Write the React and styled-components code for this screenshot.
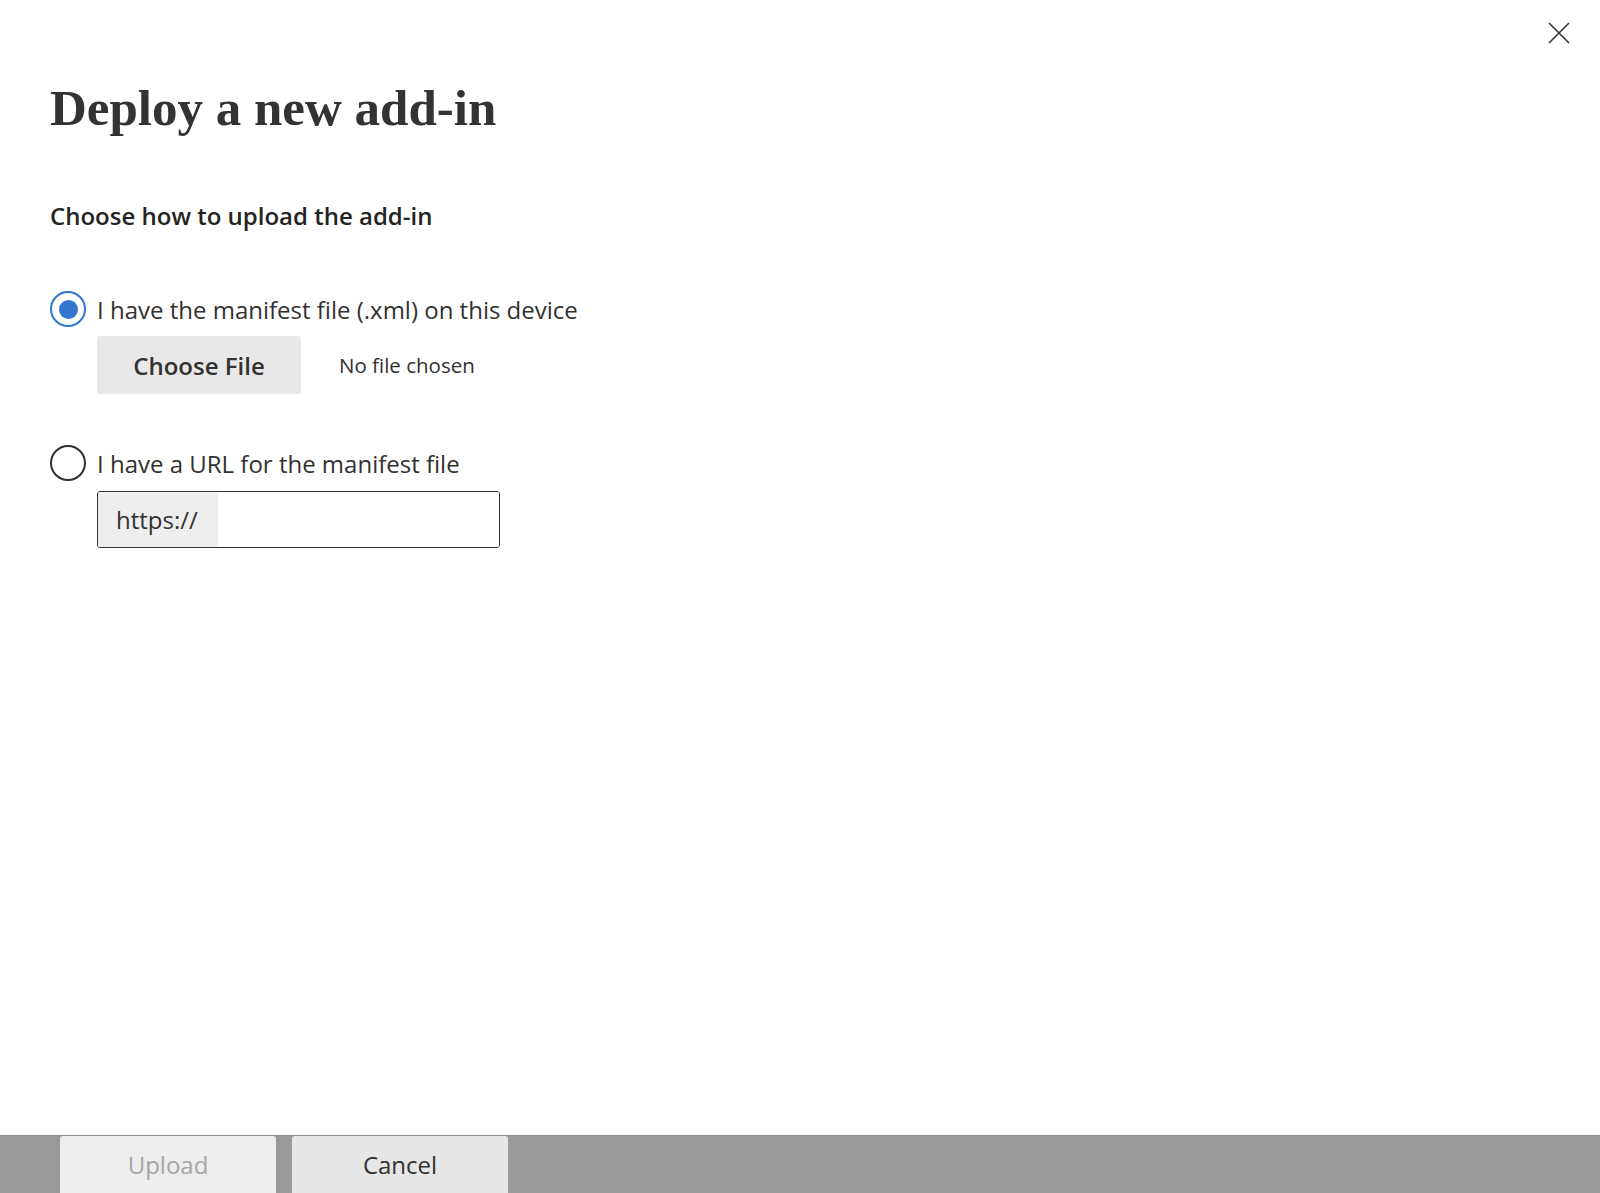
import React from "react";
import styled, { createGlobalStyle } from "styled-components";

const Global = createGlobalStyle`
  html, body { margin: 0; padding: 0; background: #fff; }
  body { font-family: "Open Sans", "Noto Sans", sans-serif; color: #323130; }
  #root { min-height: 100vh; }
`;

const Page = styled.div`
  height: 100vh;
  display: flex;
  flex-direction: column;
  position: relative;
  overflow: hidden;
`;

const Content = styled.main`
  flex: 1;
  padding: 78px 0 0 50px;
  display: flex;
  flex-direction: column;
`;

const CloseButton = styled.button`
  position: absolute;
  top: 22px;
  right: 30px;
  width: 22px;
  height: 22px;
  padding: 0;
  border: none;
  background: transparent;
  cursor: pointer;
  svg { display: block; }
`;

const Title = styled.h1`
  margin: 0;
  font-family: "Liberation Serif", "Times New Roman", serif;
  font-weight: 700;
  font-size: 51px;
  line-height: 60px;
  color: #333;
`;

const Subtitle = styled.h2`
  margin: 63px 0 0;
  font-size: 24px;
  line-height: 30px;
  font-weight: 600;
  color: #252423;
`;

const Option = styled.div`
  display: flex;
  flex-direction: column;
  margin-top: ${(p) => p.$gap}px;
`;

const RadioRow = styled.label`
  display: flex;
  align-items: center;
  gap: 11px;
  height: 36px;
  font-size: 24px;
  color: #323130;
  cursor: pointer;
`;

const RadioCircle = styled.span`
  box-sizing: border-box;
  width: 36px;
  height: 36px;
  border-radius: 50%;
  border: 2px solid ${(p) => (p.$checked ? "#2f78d3" : "#323130")};
  display: flex;
  align-items: center;
  justify-content: center;
  flex-shrink: 0;
  &::after {
    content: "";
    width: 19px;
    height: 19px;
    border-radius: 50%;
    background: ${(p) => (p.$checked ? "#3276cf" : "transparent")};
  }
`;

const SubRow = styled.div`
  display: flex;
  align-items: center;
  margin: ${(p) => p.$top}px 0 0 47px;
`;

const FileButton = styled.button`
  width: 204px;
  height: 58px;
  border: none;
  border-radius: 3px;
  background: #e8e8e8;
  font-family: inherit;
  font-size: 24px;
  font-weight: 600;
  color: #323130;
  padding: 0;
`;

const FileStatus = styled.span`
  margin-left: 38px;
  font-size: 20.5px;
  color: #323130;
`;

const UrlField = styled.div`
  box-sizing: border-box;
  width: 403px;
  height: 57px;
  border: 1.5px solid #333;
  border-radius: 3px;
  display: flex;
  overflow: hidden;
`;

const UrlPrefix = styled.span`
  flex: 0 0 120px;
  background: #eeeeee;
  display: flex;
  align-items: center;
  padding-left: 18px;
  box-sizing: border-box;
  font-size: 24px;
  color: #323130;
`;

const UrlInput = styled.input`
  flex: 1;
  min-width: 0;
  border: none;
  outline: none;
  font-family: inherit;
  font-size: 24px;
  padding: 0 10px;
`;

const Footer = styled.footer`
  height: 58px;
  background: #999999;
  border-top: 1px solid #8e8e8e;
  display: flex;
  gap: 16px;
  padding-left: 60px;
  box-sizing: border-box;
`;

const FooterButton = styled.button`
  width: 216px;
  height: 100%;
  border: none;
  border-radius: 3px 3px 0 0;
  background: ${(p) => (p.disabled ? "#ededed" : "#e6e6e6")};
  color: ${(p) => (p.disabled ? "#a6a6a6" : "#323130")};
  font-family: inherit;
  font-size: 24px;
  padding: 0;
`;

export default function App() {
  return (
    <Page>
      <Global />
      <CloseButton aria-label="Close">
        <svg width="22" height="22" viewBox="0 0 22 22">
          <path d="M1 1L21 21M21 1L1 21" stroke="#333" strokeWidth="1.6" fill="none" />
        </svg>
      </CloseButton>
      <Content>
        <Title>Deploy a new add-in</Title>
        <Subtitle>Choose how to upload the add-in</Subtitle>
        <Option $gap={60}>
          <RadioRow>
            <RadioCircle $checked />
            I have the manifest file (.xml) on this device
          </RadioRow>
          <SubRow $top={9}>
            <FileButton>Choose File</FileButton>
            <FileStatus>No file chosen</FileStatus>
          </SubRow>
        </Option>
        <Option $gap={51}>
          <RadioRow>
            <RadioCircle />
            I have a URL for the manifest file
          </RadioRow>
          <SubRow $top={10}>
            <UrlField>
              <UrlPrefix>https://</UrlPrefix>
              <UrlInput type="text" />
            </UrlField>
          </SubRow>
        </Option>
      </Content>
      <Footer>
        <FooterButton disabled>Upload</FooterButton>
        <FooterButton>Cancel</FooterButton>
      </Footer>
    </Page>
  );
}
